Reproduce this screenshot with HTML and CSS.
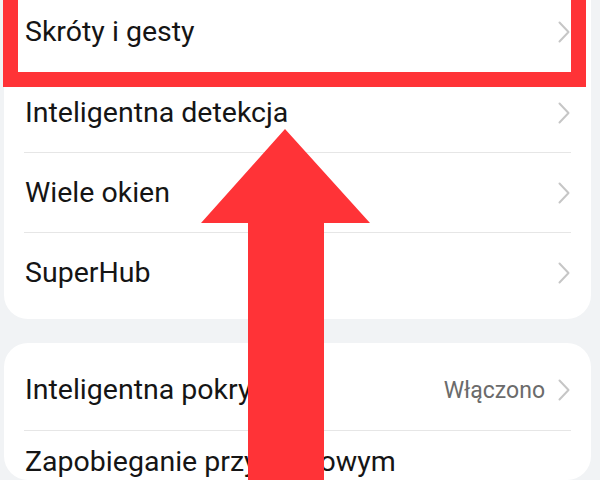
FILE: index.html
```html
<!DOCTYPE html>
<html lang="pl">
<head>
<meta charset="utf-8">
<link rel="stylesheet" href="styles.css">
</head>
<body>
<div class="page">
  <div class="card card-first">
    <div class="row first"><span class="label">Skróty i gesty</span><svg class="chev" viewBox="0 0 12 22"><polyline points="1.5,1.5 10.5,11 1.5,20.5"/></svg></div>
    <div class="row"><span class="label">Inteligentna detekcja</span><svg class="chev" viewBox="0 0 12 22"><polyline points="1.5,1.5 10.5,11 1.5,20.5"/></svg></div>
    <div class="row"><span class="label">Wiele okien</span><svg class="chev" viewBox="0 0 12 22"><polyline points="1.5,1.5 10.5,11 1.5,20.5"/></svg></div>
    <div class="row"><span class="label">SuperHub</span><svg class="chev" viewBox="0 0 12 22"><polyline points="1.5,1.5 10.5,11 1.5,20.5"/></svg></div>
  </div>
  <div class="card card-second">
    <div class="row first"><span class="label">Inteligentna pokrywa</span><span class="value">Włączono</span><svg class="chev" viewBox="0 0 12 22"><polyline points="1.5,1.5 10.5,11 1.5,20.5"/></svg></div>
    <div class="row multi"><span class="label">Zapobieganie przypadkowym</span></div>
  </div>
</div>
<div class="highlight"></div>
<svg class="arrow" viewBox="0 0 600 480" width="600" height="480"><polygon points="285,129 370,223 324,223 324,480 248,480 248,223 201,223"/></svg>
</body>
</html>
```
FILE: styles.css
```css
html, body {
  margin: 0;
  padding: 0;
  background: #f1f3f5;
  width: 600px;
  height: 480px;
  overflow: hidden;
  font-family: Roboto, "Noto Sans", sans-serif;
  color: #151515;
}
.page {
  padding: 0 9px 0 4px;
}
.card {
  background: #ffffff;
  border-radius: 24px;
  padding: 0 20px;
}
.card-first {
  margin-top: -40px;
  padding-top: 32px;
  padding-bottom: 7px;
}
.card-second {
  margin-top: 24px;
  padding-top: 7px;
}
.row {
  display: flex;
  align-items: center;
  height: 80px;
  box-sizing: border-box;
  border-top: 1px solid #e6e6e6;
}
.row.first {
  border-top: none;
}
.row.multi {
  height: 50px;
  align-items: flex-start;
  padding-top: 14px;
}
.label {
  flex: 1;
  font-size: 28.5px;
  line-height: 34px;
  padding-left: 1px;
}
.value {
  font-size: 23px;
  color: #6b6b6b;
  margin-right: 13px;
}
.chev {
  width: 12px;
  height: 22px;
  flex: none;
  margin-right: 1px;
}
.chev polyline {
  fill: none;
  stroke: #c6c6c6;
  stroke-width: 2;
  stroke-linecap: round;
  stroke-linejoin: round;
}
.highlight {
  position: absolute;
  left: 3px;
  top: -40px;
  width: 553px;
  height: 97px;
  border: 15px solid #ff3337;
}
.arrow {
  position: absolute;
  left: 0;
  top: 0;
}
.arrow polygon {
  fill: #ff3337;
}
```
